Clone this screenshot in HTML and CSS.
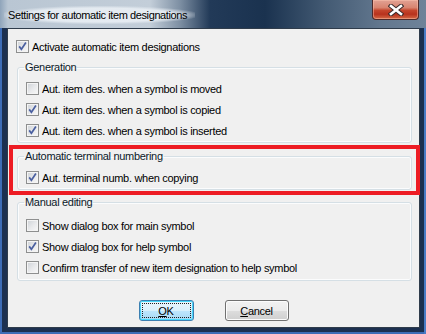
FILE: index.html
```html
<!DOCTYPE html>
<html lang="en">
<head>
<meta charset="UTF-8" />
<title>Settings for automatic item designations</title>
<link rel="stylesheet" href="styles.css">
</head>
<body>

<div class="window">
  <div class="titlebar">
    <span class="title">Settings for automatic item designations</span>
    <span class="close">
      <svg width="16" height="12" viewBox="0 0 16 12">
        <path d="M3 2 L13 10 M13 2 L3 10" stroke="#3a2a2a" stroke-width="4.6" stroke-linecap="square" />
        <path d="M3 2 L13 10 M13 2 L3 10" stroke="#ffffff" stroke-width="2.6" stroke-linecap="square" />
      </svg>
    </span>
  </div>

  <div class="client">
    <label class="check top-check"><span class="box checked"></span>Activate automatic item designations</label>

    <fieldset class="group gen">
      <legend>Generation</legend>
      <label class="check"><span class="box"></span>Aut. item des. when a symbol is moved</label>
      <label class="check"><span class="box checked"></span>Aut. item des. when a symbol is copied</label>
      <label class="check"><span class="box checked"></span>Aut. item des. when a symbol is inserted</label>
    </fieldset>

    <div class="highlight">
      <fieldset class="group term">
        <legend>Automatic terminal numbering</legend>
        <label class="check"><span class="box checked"></span>Aut. terminal numb. when copying</label>
      </fieldset>
    </div>

    <fieldset class="group manual">
      <legend>Manual editing</legend>
      <label class="check"><span class="box"></span>Show dialog box for main symbol</label>
      <label class="check"><span class="box checked"></span>Show dialog box for help symbol</label>
      <label class="check"><span class="box"></span>Confirm transfer of new item designation to help symbol</label>
    </fieldset>

    <div class="buttons">
      <button class="btn default"><span class="focus"><u>O</u>K</span></button>
      <button class="btn"><u>C</u>ancel</button>
    </div>
  </div>
</div>

</body>
</html>
```

FILE: styles.css
```css
body {
  margin: 0;
  font-family: "Liberation Sans", Arial, sans-serif;
  font-size: 11px;
  letter-spacing: -0.3px;
  color: #000;
}
.window {
  width: 426px;
  height: 334px;
  box-sizing: border-box;
  background: #1c3050;
  box-shadow: inset 2px 0 0 #3d6cb6, inset -2px 0 0 #4a7cc6, inset 0 -2px 0 #3d6cb6;
  overflow: hidden;
}
.titlebar {
  height: 28px;
  display: flex;
  justify-content: space-between;
  align-items: flex-start;
  background: linear-gradient(90deg, #8fa4ba 0, #b9c6d3 8px, #c3ced9 150px, #7d8fa3 180px, #223a58 210px, #1a324f 265px, #435a73 325px, #62778e 380px, #6f8399 426px);
}
.title {
  margin-top: 6px;
  margin-left: 4px;
  padding: 2px 8px 2px 4px;
  font-size: 11px;
  letter-spacing: -0.4px;
  line-height: 14px;
  color: #000;
  background: radial-gradient(ellipse at center, rgba(230, 236, 242, 0.95) 55%, rgba(210, 220, 230, 0) 75%);
}
.close {
  width: 45px;
  height: 19px;
  margin-right: 7px;
  display: flex;
  align-items: center;
  justify-content: center;
  border: 1px solid #4d2a2a;
  border-top: none;
  border-radius: 0 0 4px 4px;
  background: linear-gradient(180deg, #e2a294 0, #d88470 40%, #c4452c 55%, #b8321d 75%, #d56a46 100%);
  box-shadow: inset 0 0 0 1px rgba(255, 200, 180, 0.45);
}
.client {
  margin: 0 6px 0 7px;
  height: 300px;
  box-sizing: border-box;
  border: 1px solid #2f3c4b;
  background: #f0f0f0;
  padding: 7px 7px 0 9px;
}
.check {
  display: flex;
  align-items: center;
  height: 21px;
  gap: 3px;
  white-space: nowrap;
}
.top-check {
  margin-left: -1px;
}
.box {
  width: 13px;
  height: 13px;
  box-sizing: border-box;
  border: 1px solid #8e8f8f;
  background: linear-gradient(135deg, #cdd1d6 0, #e9eaec 55%, #f8f8f8 100%);
  box-shadow: inset 0 0 0 1px #f4f4f4;
  flex: none;
}
.box.checked {
  background-color: #e8e8e8;
  background-image: url("data:image/svg+xml,%3Csvg xmlns='http://www.w3.org/2000/svg' width='11' height='11' viewBox='0 0 11 11'%3E%3Cpath d='M2.2 5.4 L4.4 8.2 L8.9 1.6' fill='none' stroke='%234a5fa0' stroke-width='1.7'/%3E%3C/svg%3E"), linear-gradient(135deg, #cdd1d6 0, #e9eaec 55%, #f8f8f8 100%);
  background-position: center, 0 0;
  background-repeat: no-repeat;
}
.group {
  margin: 0;
  padding: 4px 8px 1px 8px;
  border: 1px solid #d5dfe5;
  border-radius: 3px;
  box-shadow: inset 0 0 0 1px #fbfcfd;
}
.group legend {
  margin-left: -2px;
  padding: 0 1px;
  line-height: 13px;
  color: #0c1a2a;
}
.gen {
  margin-top: 4px;
}
.highlight {
  margin: 2px -8px 0 -8px;
  padding: 1px 4px 1px 4px;
  border: 4px solid #ed1c24;
}
.manual {
  margin-top: 1px;
  padding-top: 6px;
  padding-bottom: 2px;
}
.buttons {
  display: flex;
  justify-content: center;
  gap: 31px;
  margin-top: 19px;
  margin-left: -9px;
  margin-right: -7px;
}
.btn {
  height: 21px;
  box-sizing: border-box;
  padding: 0;
  font-family: inherit;
  font-size: 11px;
  letter-spacing: inherit;
  color: #000;
  border: 1px solid #707070;
  border-radius: 3px;
  background: linear-gradient(180deg, #f2f2f2 0, #ebebeb 50%, #dddddd 51%, #cfcfcf 100%);
  box-shadow: inset 0 0 0 1px #fcfcfc;
  width: 64px;
}
.btn.default {
  width: 55px;
  border-color: #3c7fb1;
  background: linear-gradient(180deg, #eaf6fd 0, #d9f0fc 50%, #bee6fd 51%, #a7d9f5 100%);
  box-shadow: inset 0 0 0 1px #48d8fb;
  padding: 2px;
}
.focus {
  display: flex;
  align-items: center;
  justify-content: center;
  height: 100%;
  box-sizing: border-box;
  border: 1px dotted #222;
}
u {
  text-decoration-thickness: 1px;
  text-underline-offset: 1px;
}
```
